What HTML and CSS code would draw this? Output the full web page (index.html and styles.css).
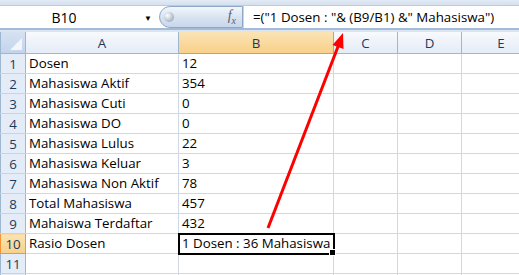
FILE: index.html
```html
<!DOCTYPE html>
<html lang="en">
<head>
  <meta charset="UTF-8">
  <title>Rasio Dosen</title>
  <link rel="stylesheet" href="styles.css">
</head>
<body>
  <div class="top-strip"></div>
  <div class="formula-bar">
    <div class="name-box">
      <span class="cell-ref">B10</span>
      <span class="drop">&#9660;</span>
    </div>
    <div class="fx-pill">
      <span class="knob"></span>
      <span class="fx"><i>f</i><sub>x</sub></span>
    </div>
    <div class="formula">=("1 Dosen : "&amp; (B9/B1) &amp;" Mahasiswa")</div>
  </div>
  <div class="bar-gap"></div>

  <table class="sheet">
    <colgroup>
      <col class="c-head">
      <col class="c-a">
      <col class="c-b">
      <col class="c-c">
      <col class="c-d">
      <col class="c-e">
    </colgroup>
    <thead>
      <tr>
        <th class="corner"><span class="tri"></span></th>
        <th>A</th>
        <th class="sel">B</th>
        <th>C</th>
        <th>D</th>
        <th>E</th>
      </tr>
    </thead>
    <tbody>
      <tr><th>1</th><td>Dosen</td><td>12</td><td></td><td></td><td></td></tr>
      <tr><th>2</th><td>Mahasiswa Aktif</td><td>354</td><td></td><td></td><td></td></tr>
      <tr><th>3</th><td>Mahasiswa Cuti</td><td>0</td><td></td><td></td><td></td></tr>
      <tr><th>4</th><td>Mahasiswa DO</td><td>0</td><td></td><td></td><td></td></tr>
      <tr><th>5</th><td>Mahasiswa Lulus</td><td>22</td><td></td><td></td><td></td></tr>
      <tr><th>6</th><td>Mahasiswa Keluar</td><td>3</td><td></td><td></td><td></td></tr>
      <tr><th>7</th><td>Mahasiswa Non Aktif</td><td>78</td><td></td><td></td><td></td></tr>
      <tr><th>8</th><td>Total Mahasiswa</td><td>457</td><td></td><td></td><td></td></tr>
      <tr><th>9</th><td>Mahaiswa Terdaftar</td><td>432</td><td></td><td></td><td></td></tr>
      <tr><th class="sel">10</th><td>Rasio Dosen</td><td class="active">1 Dosen : 36 Mahasiswa</td><td></td><td></td><td></td></tr>
      <tr><th>11</th><td></td><td></td><td></td><td></td><td></td></tr>
      <tr><th></th><td></td><td></td><td></td><td></td><td></td></tr>
    </tbody>
  </table>

  <!-- panah penunjuk rumus -->
  <svg class="arrow" width="519" height="275" viewBox="0 0 519 275">
    <line x1="268" y1="228" x2="339" y2="44" stroke="#ff0000" stroke-width="3"/>
    <polygon points="343,33 343.5,49 332.5,45" fill="#ff0000"/>
  </svg>
</body>
</html>
```

FILE: styles.css
```css
body {
  margin: 0;
  width: 519px;
  height: 275px;
  overflow: hidden;
  position: relative;
  background: #dbe5f1;
  font-family: "Open Sans", "Liberation Sans", sans-serif;
  color: #000;
}
.top-strip {
  height: 5px;
  background: linear-gradient(#e3ebf6, #d4e0ef);
  border-bottom: 1px solid #b9cce4;
}
.formula-bar {
  display: flex;
  height: 22px;
  background: #fff;
  border-bottom: 2px solid #a3bad9;
}
.name-box {
  width: 159px;
  display: flex;
  align-items: center;
  font-size: 14px;
}
.cell-ref {
  flex: 1;
  text-align: center;
  padding-right: 16px;
}
.drop {
  font-size: 8px;
  margin-right: 7px;
  color: #000;
}
.fx-pill {
  width: 84px;
  display: flex;
  align-items: center;
  justify-content: space-between;
  border: 1px solid #8fa7c9;
  border-radius: 11px 0 0 11px;
  background: linear-gradient(#f2f6fb, #d7e2f0 55%, #c9d7ea);
  box-sizing: border-box;
}
.knob {
  width: 10px;
  height: 10px;
  margin-left: 4px;
  border-radius: 50%;
  background: radial-gradient(circle at 35% 35%, #ffffff, #a9b4c2 70%, #8d99a8);
}
.fx {
  font-family: "Liberation Serif", serif;
  font-size: 14px;
  color: #55606e;
  margin-right: 6px;
}
.fx sub {
  font-size: 10px;
  font-style: italic;
}
.formula {
  flex: 1;
  padding-left: 9px;
  font-size: 13.3px;
  line-height: 22px;
  white-space: nowrap;
  border-left: 1px solid #c5d4e7;
}
.bar-gap {
  height: 2px;
}
.sheet {
  border-collapse: collapse;
  table-layout: fixed;
  width: 540px;
  background: #fff;
  font-size: 13.3px;
}
.c-head { width: 25px; }
.c-a { width: 153px; }
.c-b { width: 155px; }
.c-c { width: 64px; }
.c-d { width: 64px; }
.c-e { width: 79px; }
.sheet td {
  height: 19px;
  padding: 0 3px;
  border: 1px solid #d0d7e5;
  white-space: nowrap;
  overflow: visible;
  line-height: 19px;
}
.sheet thead th {
  height: 19px;
  font-weight: normal;
  color: #1e395b;
  background: linear-gradient(#f7f9fc, #e4ecf7);
  border: 1px solid #9eb6ce;
  border-top: 0;
}
.sheet thead th.sel {
  background: linear-gradient(#fbe3b4, #f8d08a);
  border-color: #f29536;
}
.sheet tbody th {
  font-weight: normal;
  color: #1e395b;
  background: #e4ecf7;
  border: 1px solid #9eb6ce;
  border-top-color: #c5d4e6;
  border-bottom-color: #c5d4e6;
  padding: 0;
}
.sheet tbody th.sel {
  background: linear-gradient(#fbe3b4, #f8d08a);
  border-color: #f29536;
}
.corner {
  position: relative;
  background: linear-gradient(#d5e1f1, #c2d4ec) !important;
}
.tri {
  position: absolute;
  right: 3px;
  bottom: 3px;
  width: 0;
  height: 0;
  border-left: 12px solid transparent;
  border-bottom: 12px solid #f3f6fb;
}
.sheet td.active {
  position: relative;
  outline: 2px solid #000;
  outline-offset: -1px;
}
.sheet td.active::after {
  content: "";
  position: absolute;
  right: -3px;
  bottom: -3px;
  width: 5px;
  height: 5px;
  background: #000;
  border: 1px solid #fff;
}
.arrow {
  position: absolute;
  left: 0;
  top: 0;
  pointer-events: none;
}
```
